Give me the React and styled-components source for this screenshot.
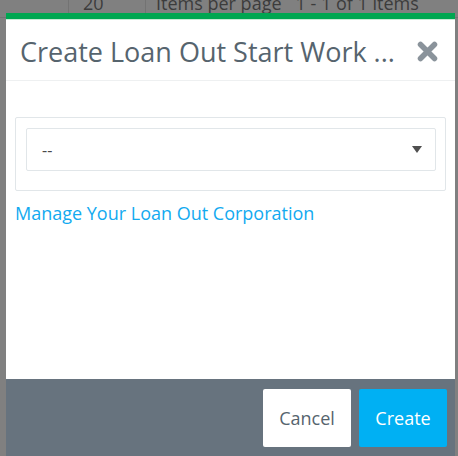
import React from "react";
import styled, { createGlobalStyle } from "styled-components";

const GlobalStyle = createGlobalStyle`
  html, body {
    margin: 0;
    padding: 0;
    background: #808080;
    font-family: "Open Sans", "Noto Sans", sans-serif;
  }
  * { box-sizing: border-box; }
`;

const Page = styled.div`
  position: relative;
  width: 458px;
  height: 456px;
  overflow: hidden;
  background: #808080;
`;

const PagerRow = styled.div`
  display: grid;
  grid-template-columns: 68px 77px 1fr;
  height: 30px;
  margin-top: -12px;
  border-bottom: 1px solid #737373;
`;

const PagerCell = styled.div`
  display: flex;
  align-items: center;
  padding-left: ${(p) => p.$pad || 12}px;
  border-left: ${(p) => (p.$line ? "1px solid #737373" : "none")};
  color: #3c3c3c;
  font-size: 18px;
  white-space: nowrap;
`;

const Modal = styled.div`
  position: absolute;
  top: 13px;
  left: 6px;
  width: 449px;
  height: 448px;
  display: flex;
  flex-direction: column;
  background: #fff;
  border-top: 6px solid #00a651;
`;

const Header = styled.div`
  display: flex;
  align-items: center;
  justify-content: space-between;
  height: 62px;
  padding: 2px 16px 0 14px;
  border-top: 1px solid #c9ead6;
  border-bottom: 1px solid #eef0f1;
`;

const Title = styled.h2`
  margin: 0;
  font-size: 27px;
  font-weight: 400;
  color: #56646e;
  white-space: nowrap;
`;

const Close = styled.button`
  border: none;
  background: none;
  padding: 0;
  display: flex;
  cursor: pointer;
`;

const Body = styled.div`
  flex: 1;
  padding: 36px 9px 0 9px;
`;

const Panel = styled.div`
  border: 1px solid #e1e6e9;
  border-radius: 2px;
  padding: 10px 9px 19px 10px;
`;

const Select = styled.div`
  display: flex;
  align-items: center;
  justify-content: space-between;
  height: 43px;
  padding: 0 13px 0 15px;
  border: 1px solid #e1e6e9;
  border-radius: 2px;
  color: #4a4a4a;
  font-size: 16px;
`;

const Caret = styled.span`
  width: 0;
  height: 0;
  border-left: 5px solid transparent;
  border-right: 5px solid transparent;
  border-top: 7px solid #4f4f4f;
`;

const Link = styled.a`
  display: inline-block;
  margin-top: 10px;
  color: #12aaf0;
  font-size: 18px;
  text-decoration: none;
`;

const Footer = styled.div`
  height: 82px;
  flex-shrink: 0;
  display: flex;
  justify-content: flex-end;
  align-items: flex-start;
  gap: 8px;
  padding: 10px 8px 0 0;
  background: #67737e;
`;

const Button = styled.button`
  width: 88px;
  height: 58px;
  padding: 0;
  border: none;
  border-radius: 2px;
  font-family: inherit;
  font-size: 18px;
  background: ${(p) => (p.$primary ? "#00b0f3" : "#fff")};
  color: ${(p) => (p.$primary ? "#fff" : "#56646e")};
  cursor: pointer;
`;

export default function App() {
  return (
    <Page>
      <GlobalStyle />
      <PagerRow>
        <PagerCell />
        <PagerCell $line $pad={14}>20</PagerCell>
        <PagerCell $line $pad={10}>Items per page &nbsp; 1 - 1 of 1 items</PagerCell>
      </PagerRow>
      <Modal>
        <Header>
          <Title>Create Loan Out Start Work ...</Title>
          <Close aria-label="close">
            <svg width="23" height="23" viewBox="0 0 23 23">
              <path
                d="M4.5 4.5 L18.5 18.5 M18.5 4.5 L4.5 18.5"
                stroke="#8a939b"
                strokeWidth="5.5"
                strokeLinecap="round"
              />
            </svg>
          </Close>
        </Header>
        <Body>
          <Panel>
            <Select>
              <span>--</span>
              <Caret />
            </Select>
          </Panel>
          <Link href="#">Manage Your Loan Out Corporation</Link>
        </Body>
        <Footer>
          <Button>Cancel</Button>
          <Button $primary>Create</Button>
        </Footer>
      </Modal>
    </Page>
  );
}
